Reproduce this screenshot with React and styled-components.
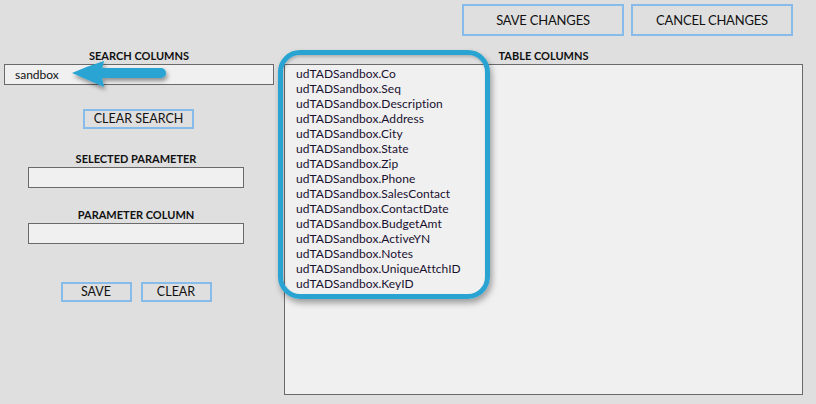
import React from "react";
import styled, { createGlobalStyle } from "styled-components";

const Global = createGlobalStyle`
  html, body {
    margin: 0;
    padding: 0;
    background: #dfdfdf;
    font-family: "Lato", "Liberation Sans", sans-serif;
    color: #111;
  }
`

const Page = styled.div`
  position: relative;
  width: 816px;
  height: 404px;
  overflow: hidden;
  background: #dfdfdf;
`

const TopBar = styled.div`
  display: flex;
  justify-content: flex-end;
  gap: 7px;
  padding: 4px 23px 0 0;
  height: 32px;
`

const BigButton = styled.button`
  width: 162px;
  height: 32px;
  background: #dfdfdf;
  border: 2px solid #86bbea;
  font-family: "Lato", "Liberation Sans", sans-serif;
  font-size: 13px;
  letter-spacing: -0.2px;
  color: #111;
  padding: 0;
`

const Main = styled.div`
  display: grid;
  grid-template-columns: 284px 519px;
  margin-top: 14px;
`

const LeftCol = styled.div`
  display: flex;
  flex-direction: column;
  align-items: center;
  width: 272px;
`

const Label = styled.div`
  font-size: 11px;
  font-weight: 700;
  text-align: center;
  line-height: 12px;
  height: 14px;
  margin-top: ${p => p.top || 0}px;
  margin-left: ${p => p.shift || 0}px;
`

const Input = styled.div`
  box-sizing: border-box;
  width: ${p => p.w}px;
  height: 21px;
  background: #f0f0f0;
  border: 1px solid #6a6a6a;
  font-size: 12px;
  line-height: 19px;
  padding-left: 10px;
  margin-left: ${p => p.shift || 0}px;
`

const SmallButton = styled.button`
  box-sizing: border-box;
  width: ${p => p.w}px;
  height: 20px;
  background: #dfdfdf;
  border: 2px solid #86bbea;
  font-family: "Lato", "Liberation Sans", sans-serif;
  font-size: 12.5px;
  line-height: 16px;
  color: #111;
  padding: 0;
`

const ClearSearch = styled(SmallButton)`
  margin-top: 24px;
  margin-left: 5px;
`

const ButtonRow = styled.div`
  display: flex;
  gap: 9px;
  margin-top: 38px;
`

const RightCol = styled.div`
  display: flex;
  flex-direction: column;
`

const ListBox = styled.div`
  box-sizing: border-box;
  height: 331px;
  background: #f0f0f0;
  border: 1px solid #6a6a6a;
  padding: 1px 0 0 11px;
`

const Item = styled.div`
  font-size: 12px;
  line-height: 15px;
  color: #1a1030;
  letter-spacing: 0.05px;
`

const Callout = styled.div`
  position: absolute;
  left: 278px;
  top: 50px;
  width: 212px;
  height: 249px;
  box-sizing: border-box;
  border: 5px solid #29a4d2;
  border-radius: 22px;
  box-shadow: 2px 4px 6px rgba(0, 0, 0, 0.35), inset 1px 2px 3px rgba(0, 0, 0, 0.2);
  pointer-events: none;
`

const ArrowSvg = styled.svg`
  position: absolute;
  left: 66px;
  top: 56px;
  overflow: visible;
`

const columns = [
  "Co", "Seq", "Description", "Address", "City", "State", "Zip", "Phone",
  "SalesContact", "ContactDate", "BudgetAmt", "ActiveYN", "Notes",
  "UniqueAttchID", "KeyID",
]

export default function App() {
  return (
    <Page>
      <Global />
      <TopBar>
        <BigButton>SAVE CHANGES</BigButton>
        <BigButton>CANCEL CHANGES</BigButton>
      </TopBar>
      <Main>
        <LeftCol>
          <Label shift={6}>SEARCH COLUMNS</Label>
          <Input w={270} shift={6}>sandbox</Input>
          <ClearSearch w={111}>CLEAR SEARCH</ClearSearch>
          <Label top={24}>SELECTED PARAMETER</Label>
          <Input w={216} />
          <Label top={21}>PARAMETER COLUMN</Label>
          <Input w={216} />
          <ButtonRow>
            <SmallButton w={71}>SAVE</SmallButton>
            <SmallButton w={71}>CLEAR</SmallButton>
          </ButtonRow>
        </LeftCol>
        <RightCol>
          <Label>TABLE COLUMNS</Label>
          <ListBox>
            {columns.map(c => (
              <Item key={c}>udTADSandbox.{c}</Item>
            ))}
          </ListBox>
        </RightCol>
      </Main>
      <Callout />
      <ArrowSvg width="110" height="40" viewBox="0 0 110 40">
        <defs>
          <filter id="sh" x="-20%" y="-40%" width="150%" height="200%">
            <feDropShadow dx="1.5" dy="3" stdDeviation="2" floodColor="#000" floodOpacity="0.4" />
          </filter>
        </defs>
        <g filter="url(#sh)">
          <line x1="34" y1="17" x2="95" y2="17" stroke="#29a4d2" strokeWidth="10" strokeLinecap="round" />
          <path d="M6,17 Q22,10 38,5 Q34,17 38,31 Q22,24 6,17 Z" fill="#29a4d2" />
        </g>
      </ArrowSvg>
    </Page>
  );
}
